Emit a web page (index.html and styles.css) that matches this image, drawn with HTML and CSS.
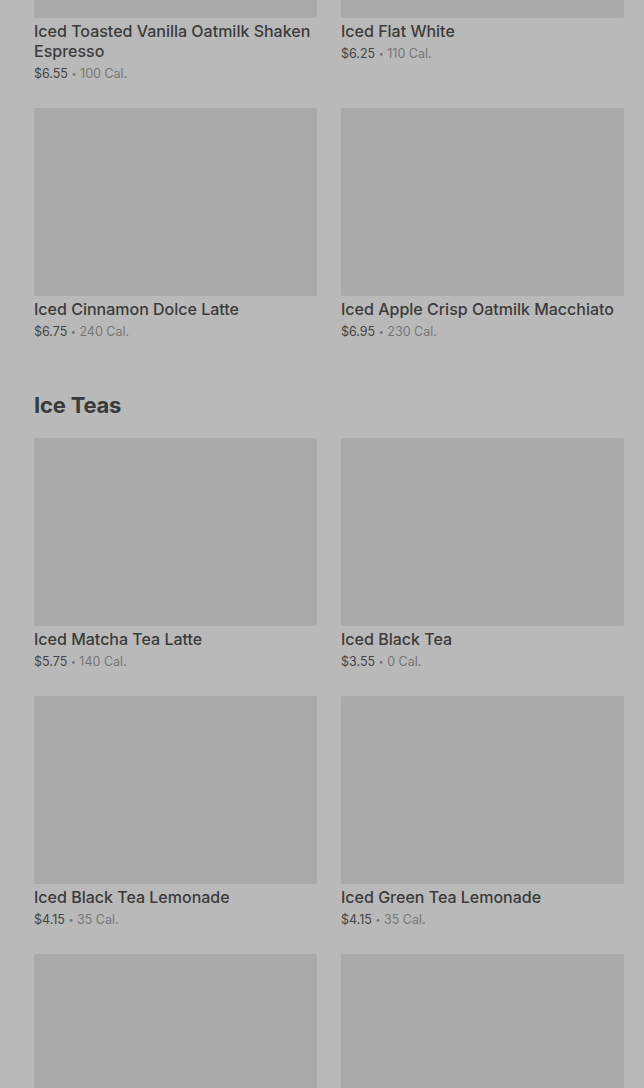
FILE: index.html
```html
<!DOCTYPE html>
<html>
<head>
<meta charset="utf-8">
<link rel="stylesheet" href="styles.css">
</head>
<body>
<main class="menu">
  <section class="section">
    <div class="grid">
      <div class="card"><div class="thumb"></div><div class="title">Iced Toasted Vanilla Oatmilk Shaken Espresso</div><div class="meta"><span class="price">$6.55</span> <span class="dot">•</span> 100 Cal.</div></div>
      <div class="card"><div class="thumb"></div><div class="title">Iced Flat White</div><div class="meta"><span class="price">$6.25</span> <span class="dot">•</span> 110 Cal.</div></div>
      <div class="card"><div class="thumb"></div><div class="title">Iced Cinnamon Dolce Latte</div><div class="meta"><span class="price">$6.75</span> <span class="dot">•</span> 240 Cal.</div></div>
      <div class="card"><div class="thumb"></div><div class="title">Iced Apple Crisp Oatmilk Macchiato</div><div class="meta"><span class="price">$6.95</span> <span class="dot">•</span> 230 Cal.</div></div>
    </div>
  </section>
  <section class="section">
    <h2 class="heading">Ice Teas</h2>
    <div class="grid">
      <div class="card"><div class="thumb"></div><div class="title">Iced Matcha Tea Latte</div><div class="meta"><span class="price">$5.75</span> <span class="dot">•</span> 140 Cal.</div></div>
      <div class="card"><div class="thumb"></div><div class="title">Iced Black Tea</div><div class="meta"><span class="price">$3.55</span> <span class="dot">•</span> 0 Cal.</div></div>
      <div class="card"><div class="thumb"></div><div class="title">Iced Black Tea Lemonade</div><div class="meta"><span class="price">$4.15</span> <span class="dot">•</span> 35 Cal.</div></div>
      <div class="card"><div class="thumb"></div><div class="title">Iced Green Tea Lemonade</div><div class="meta"><span class="price">$4.15</span> <span class="dot">•</span> 35 Cal.</div></div>
      <div class="card"><div class="thumb"></div></div>
      <div class="card"><div class="thumb"></div></div>
    </div>
  </section>
</main>
</body>
</html>
```
FILE: styles.css
```css
html, body {
  margin: 0;
  padding: 0;
  background: #b9b9b9;
  overflow: hidden;
  height: 1088px;
}
body {
  font-family: Inter, "Noto Sans", sans-serif;
  color: #3a3a3a;
}
.menu {
  margin-top: -170px;
  padding: 0 20px 0 34px;
}
.section + .section {
  margin-top: 49px;
}
.heading {
  margin: 0 0 19px;
  font-size: 22px;
  line-height: 28px;
  font-weight: 700;
  color: #3a3a3a;
  letter-spacing: -0.2px;
}
.grid {
  display: grid;
  grid-template-columns: 283px 283px;
  column-gap: 24px;
  row-gap: 24px;
}
.thumb {
  height: 188px;
  background: #a9a9a9;
  border-radius: 2px;
}
.title {
  margin-top: 3px;
  font-size: 16px;
  line-height: 20px;
  font-weight: 500;
  color: #3b3b3b;
}
.meta {
  margin-top: 3px;
  font-size: 12.5px;
  line-height: 20px;
  color: #767676;
}
.price {
  color: #444;
}
.dot {
  font-size: 9px;
  vertical-align: 1px;
}
```
